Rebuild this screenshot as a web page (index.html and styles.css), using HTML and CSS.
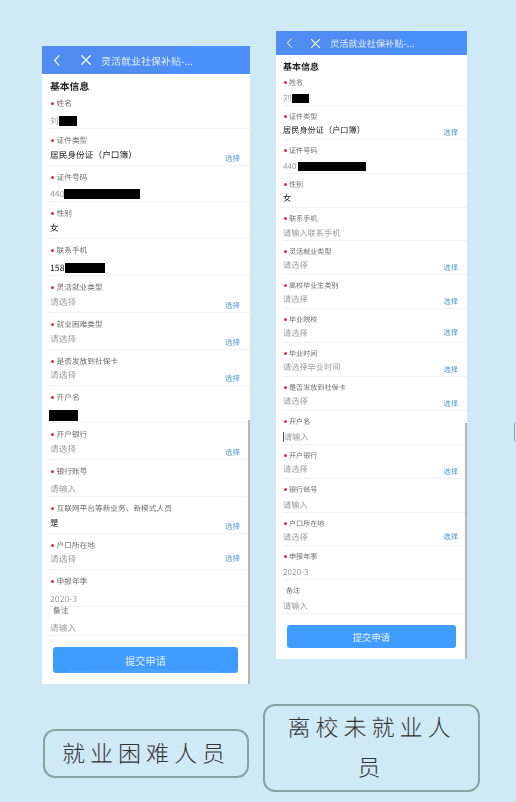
FILE: index.html
```html
<!DOCTYPE html>
<html lang="en">
<head>
    <meta charset="UTF-8">
    <title>灵活就业社保补贴</title>
    <link rel="stylesheet" href="styles.css">
</head>
<body>
    <div class="canvas">
        <div class="phone phone-a">
            <div class="topbar">
                <svg class="ico-back" viewBox="0 0 10 16"><path d="M8 1.5 2 8l6 6.5"/></svg>
                <svg class="ico-close" viewBox="0 0 14 14"><path d="M1.5 1.5 12.5 12.5M12.5 1.5 1.5 12.5"/></svg>
                <span class="title">灵活就业社保补贴-...</span>
            </div>
            <div class="body">
                <h2>基本信息</h2>
                <div class="row input"><label>姓名</label><div class="val"><span class="muted">刘</span><i class="mask w-name"></i></div></div>
                <div class="row pick"><label>证件类型</label><div class="val"><span class="dark">居民身份证（户口簿）</span><a>选择</a></div></div>
                <div class="row input"><label>证件号码</label><div class="val"><span class="muted">440</span><i class="mask w-id"></i></div></div>
                <div class="row pick"><label>性别</label><div class="val"><span class="dark">女</span></div></div>
                <div class="row input"><label>联系手机</label><div class="val"><span class="dark">158</span><i class="mask w-tel"></i></div></div>
                <div class="row pick"><label>灵活就业类型</label><div class="val"><span class="muted">请选择</span><a>选择</a></div></div>
                <div class="row pick"><label>就业困难类型</label><div class="val"><span class="muted">请选择</span><a>选择</a></div></div>
                <div class="row pick"><label>是否发放到社保卡</label><div class="val"><span class="muted">请选择</span><a>选择</a></div></div>
                <div class="row input"><label>开户名</label><div class="val"><i class="mask w-acct"></i></div></div>
                <div class="row pick"><label>开户银行</label><div class="val"><span class="muted">请选择</span><a>选择</a></div></div>
                <div class="row input"><label>银行账号</label><div class="val"><span class="muted">请输入</span></div></div>
                <div class="row pick"><label>互联网平台等新业务、新模式人员</label><div class="val"><span class="dark">是</span><a>选择</a></div></div>
                <div class="row pick mid"><label>户口所在地</label><div class="val"><span class="muted">请选择</span><a>选择</a></div></div>
                <div class="row input"><label>申报年季</label><div class="val"><span class="muted">2020-3</span></div></div>
                <div class="row input short"><label class="plain">备注</label><div class="val"><span class="muted">请输入</span></div></div>
                <button class="submit">提交申请</button>
            </div>
            <div class="scroll"></div>
        </div>

        <div class="phone phone-b">
            <div class="topbar">
                <svg class="ico-back" viewBox="0 0 10 16"><path d="M8 1.5 2 8l6 6.5"/></svg>
                <svg class="ico-close" viewBox="0 0 14 14"><path d="M1.5 1.5 12.5 12.5M12.5 1.5 1.5 12.5"/></svg>
                <span class="title">灵活就业社保补贴-...</span>
            </div>
            <div class="body">
                <h2>基本信息</h2>
                <div class="row input"><label>姓名</label><div class="val"><span class="muted">刘</span><i class="mask w-name"></i></div></div>
                <div class="row pick"><label>证件类型</label><div class="val"><span class="dark">居民身份证（户口簿）</span><a>选择</a></div></div>
                <div class="row input"><label>证件号码</label><div class="val"><span class="muted">440</span><i class="mask w-id"></i></div></div>
                <div class="row pick"><label>性别</label><div class="val"><span class="dark">女</span></div></div>
                <div class="row input"><label>联系手机</label><div class="val"><span class="muted">请输入联系手机</span></div></div>
                <div class="row pick"><label>灵活就业类型</label><div class="val"><span class="muted">请选择</span><a>选择</a></div></div>
                <div class="row pick"><label>离校毕业生类别</label><div class="val"><span class="muted">请选择</span><a>选择</a></div></div>
                <div class="row pick mid"><label>毕业院校</label><div class="val"><span class="muted">请选择</span><a>选择</a></div></div>
                <div class="row pick"><label>毕业时间</label><div class="val"><span class="muted">请选择毕业时间</span><a>选择</a></div></div>
                <div class="row pick"><label>是否发放到社保卡</label><div class="val"><span class="muted">请选择</span><a>选择</a></div></div>
                <div class="row input"><label>开户名</label><div class="val"><i class="caret"></i><span class="muted">请输入</span></div></div>
                <div class="row pick"><label>开户银行</label><div class="val"><span class="muted">请选择</span><a>选择</a></div></div>
                <div class="row input"><label>银行账号</label><div class="val"><span class="muted">请输入</span></div></div>
                <div class="row pick mid"><label>户口所在地</label><div class="val"><span class="muted">请选择</span><a>选择</a></div></div>
                <div class="row input"><label>申报年季</label><div class="val"><span class="muted">2020-3</span></div></div>
                <div class="row input"><label class="plain">备注</label><div class="val"><span class="muted">请输入</span></div></div>
                <button class="submit">提交申请</button>
            </div>
            <div class="scroll"></div>
        </div>

        <div class="tag tag-a">就业困难人员</div>
        <div class="tag tag-b">离校未就业人员</div>
        <div class="edge"></div>
    </div>
</body>
</html>
```

FILE: styles.css
```css
html, body { margin: 0; padding: 0; }
body { background-color: #d0e9f6; font-family: "Noto Sans CJK SC", "Liberation Sans", sans-serif; text-rendering: geometricPrecision; }
.canvas { position: relative; width: 516px; height: 802px; overflow: hidden; }

/* the two screenshots sit freely on the slide */
.phone { position: absolute; background-color: #fff; overflow: hidden; filter: blur(0.5px); }
.phone-a { left: 42px; top: 46px; width: 208px; height: 638px; --row: 36.8px; --fs: 7.7px; --val: 8.7px; --top: 6px; --indent: 6.5px; }
.phone-b { left: 276px; top: 31px; width: 191px; height: 628px; --row: 33.9px; --fs: 7.1px; --val: 8.2px; --top: 5px; --indent: 6px; }

.topbar { display: flex; align-items: center; color: #fff; background: linear-gradient(115deg, #4f8df2 0 62%, #4c90fb 62% 100%); }
.phone-a .topbar { height: 28px; padding-left: 11px; }
.phone-b .topbar { height: 24px; padding-left: 10px; }
.topbar svg { fill: none; stroke: #fff; stroke-width: 1.4; flex: none; }
.phone-a .ico-back { width: 8px; height: 13px; margin-right: 19px; }
.phone-a .ico-close { width: 12px; height: 12px; margin-right: 9px; }
.phone-b .ico-back { width: 7px; height: 12px; margin-right: 17px; }
.phone-b .ico-close { width: 11px; height: 11px; margin-right: 9px; }
.title { white-space: nowrap; color: #e3eefd; }
.phone-a .title { font-size: 10px; }
.phone-b .title { font-size: 9.2px; }

.phone-a .body { padding: 7px 0 0 8px; }
.phone-b .body { padding: 6px 0 0 7px; }
h2 { margin: 0; line-height: 11px; font-weight: 700; color: #222; }
.phone-a h2 { font-size: 9.8px; }
.phone-b h2 { font-size: 9px; }

.row { position: relative; box-sizing: border-box; height: var(--row); border-bottom: 1px solid #f0f0f0; display: flex; flex-direction: column; }
.row.short { height: 29px; }
label { display: block; font-size: var(--fs); line-height: 12px; color: #6e6e6e; padding-left: var(--indent); margin-top: var(--top); white-space: nowrap; position: relative; }
label::before { content: ""; position: absolute; left: 0.5px; top: 4px; width: 3px; height: 3px; border-radius: 50%; background-color: #d8303a; }
label.plain { padding-left: 3px; }
label.plain::before { display: none; }
.row.short label.plain { margin-top: -2px; }

.val { flex: 1; display: flex; font-size: var(--val); line-height: 14px; }
.row.input .val { align-items: flex-end; }
.row.pick .val { align-items: center; padding-bottom: 2px; }
.muted { color: #9c9c9c; }
.dark { color: #222; }
.val a { margin-left: auto; align-self: flex-end; margin-bottom: -2px; line-height: 12px; color: #4a9ac9; }
.row.mid .val a { align-self: center; margin-bottom: 0; }
.phone-a .val a { margin-right: 10px; font-size: 7.5px; }
.phone-b .val a { margin-right: 9px; font-size: 7.2px; }
.mask { display: block; background-color: #000; flex: none; }
.phone-a .mask { height: 10px; margin-bottom: 2px; }
.phone-a .w-name { width: 18px; }
.phone-a .w-id { width: 76px; }
.phone-a .w-tel { width: 40px; margin-left: 1px; }
.phone-a .w-acct { width: 29px; height: 11px; margin: 0 0 1px -1px; }
.phone-b .mask { height: 9px; margin-bottom: 2px; }
.phone-b .w-name { width: 17px; margin-left: 1px; }
.phone-b .w-id { width: 68px; margin-left: 1px; }
.caret { display: block; width: 1px; height: 10px; margin-bottom: 2px; background-color: #555; }

.submit { display: block; border: 0; border-radius: 3px; color: #e6f2ff; font-family: inherit; padding: 0; background-color: #409cff; }
.phone-a .submit { width: 185px; height: 26px; margin: 11px 0 0 3px; font-size: 10.2px; background-image: radial-gradient(ellipse 62% 32% at 50% 118%, #4aa2ff 0 99%, transparent 100%); }
.phone-b .submit { width: 169px; height: 23px; margin: 11px 0 0 4px; font-size: 9.4px; }

.scroll { position: absolute; right: 0; width: 2.5px; bottom: 0; background-color: #b5b5b5; }
.phone-a .scroll { top: 374px; }
.phone-b .scroll { top: 392px; }

.tag { position: absolute; box-sizing: border-box; border: 2px solid #84a5a3; color: #333; font-weight: 300; text-align: center; letter-spacing: 5px; font-size: 23px; border-radius: 12px; }
.tag-a { left: 43px; top: 729px; width: 206px; height: 49px; line-height: 42px; }
.tag-b { left: 263px; top: 704px; width: 217px; height: 88px; line-height: 40px; padding: 0 20px; }
.edge { position: absolute; left: 514px; top: 422px; width: 6px; height: 20px; box-sizing: border-box; border: 1px solid #9a9a9a; border-radius: 3px; }
```
